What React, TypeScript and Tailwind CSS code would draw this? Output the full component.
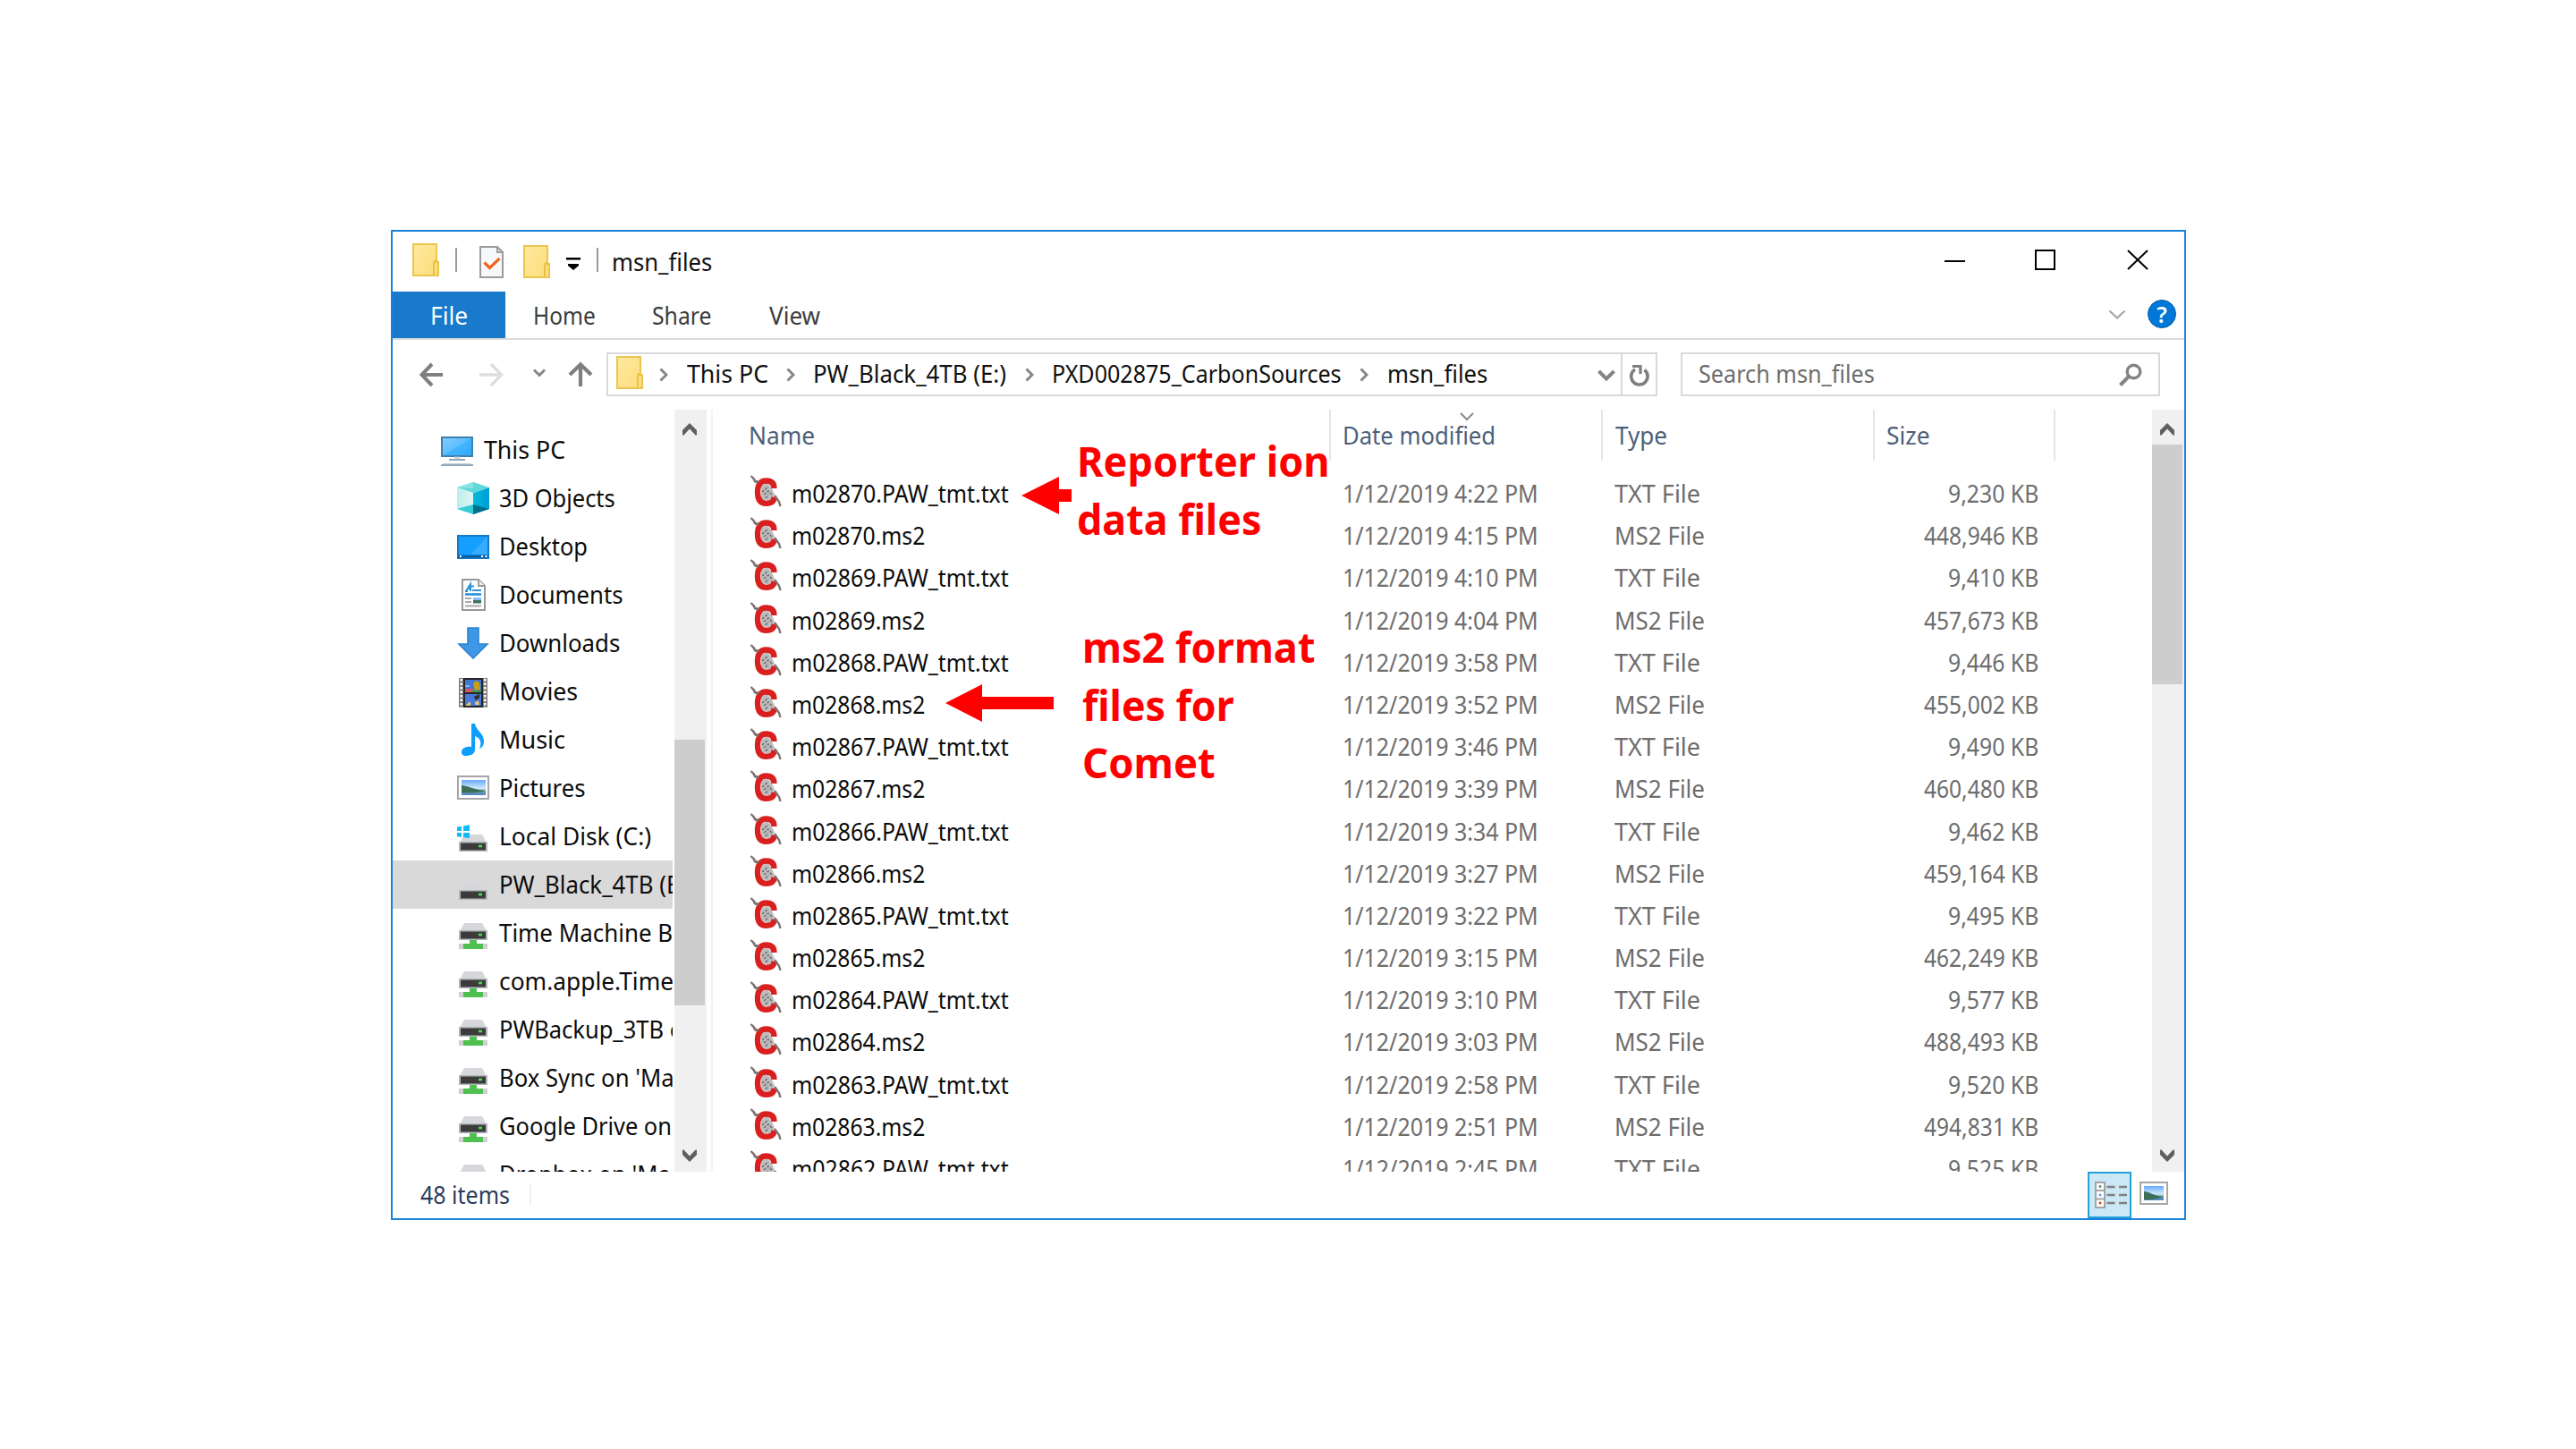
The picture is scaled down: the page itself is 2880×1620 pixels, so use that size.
import { useLayoutEffect, useRef, useState, type ReactNode } from "react";

/** Single line of text, condensed or stretched to an exact width. */
function Fit({ w, children, className = "" }: { w: number; children: string; className?: string }) {
  const ref = useRef<HTMLSpanElement>(null);
  const [scale, setScale] = useState(1);
  useLayoutEffect(() => {
    if (ref.current) setScale(w / ref.current.offsetWidth);
  }, [w, children]);
  return (
    <span className={`block shrink-0 whitespace-nowrap ${className}`} style={{ width: w }}>
      <span ref={ref} className="inline-block origin-left" style={{ transform: `scaleX(${scale})` }}>
        {children}
      </span>
    </span>
  );
}

function Icon({ children, className = "" }: { children: ReactNode; className?: string }) {
  return (
    <svg viewBox="0 0 36 36" className={`block size-9 shrink-0 ${className}`} fill="none">
      {children}
    </svg>
  );
}

function FolderIcon({ className = "" }: { className?: string }) {
  return (
    <svg viewBox="0 0 30 37" className={`block h-[37px] w-[30px] shrink-0 ${className}`} fill="none">
      <defs>
        <linearGradient id="folder" x1="0" y1="0" x2="1" y2="1">
          <stop offset="0" stopColor="#ffe9a0" />
          <stop offset="1" stopColor="#fddc7b" />
        </linearGradient>
      </defs>
      <path d="M1 1H27V21H29V36H1Z" fill="url(#folder)" stroke="#eac64f" strokeWidth="2" />
      <path d="M27 20H25L24 23V35M27 20V22" stroke="#e8c040" strokeWidth="2" />
    </svg>
  );
}

function PcIcon() {
  return (
    <Icon>
      <defs>
        <linearGradient id="screen" x1="0" y1="0" x2="1" y2="1">
          <stop offset="0" stopColor="#86cdff" />
          <stop offset=".5" stopColor="#5cbfff" />
          <stop offset=".5" stopColor="#44b5ff" />
          <stop offset="1" stopColor="#30a9fb" />
        </linearGradient>
      </defs>
      <rect x="1" y="4" width="34" height="21" fill="url(#screen)" stroke="#3d7fae" strokeWidth="2" />
      <path d="M15 26.5H21" stroke="#c5cdd6" strokeWidth="2" />
      <path d="M9 29H27" stroke="#93a5b5" strokeWidth="2" />
      <path d="M3 33H33L36 37H0Z" fill="#c3ccd5" />
      <path d="M0 35.2H36" stroke="#8fa3b6" strokeWidth="1.8" />
    </Icon>
  );
}

function CubeIcon() {
  return (
    <Icon>
      <defs>
        <linearGradient id="cubeL" x1="0" y1="0" x2="1" y2="0">
          <stop offset="0" stopColor="#bdeeed" />
          <stop offset="1" stopColor="#dff6f2" />
        </linearGradient>
        <linearGradient id="cubeR" x1="0" y1="0" x2="1" y2="0">
          <stop offset="0" stopColor="#00bcd8" />
          <stop offset="1" stopColor="#009bd9" />
        </linearGradient>
      </defs>
      <path d="M0 6L18 12V36L0 30Z" fill="url(#cubeL)" />
      <path d="M36 6L18 12V36L36 30Z" fill="url(#cubeR)" />
      <path d="M0 6L18 0L36 6L18 12Z" fill="#5fd8dc" />
      <path d="M0 6L18 0V7Z" fill="#8be4e4" />
      <path d="M0 30L18 25V36Z" fill="#33cdd8" />
      <path d="M18 25L36 30L18 36Z" fill="#006f8c" />
    </Icon>
  );
}

function DesktopIcon() {
  return (
    <Icon>
      <rect x="1" y="6" width="34" height="25" fill="#149fff" stroke="#1579c4" strokeWidth="2" />
      <path d="M34 7V27H15Z" fill="#35acff" />
      <path d="M1 29H35" stroke="#0a5ea5" strokeWidth="3" />
      <path d="M3 29H5M27 29H29M31.500 29H33.500" stroke="#fff" strokeWidth="2" />
    </Icon>
  );
}

function DocumentIcon() {
  return (
    <Icon>
      <path d="M6 1H24L31 8V35H6Z" fill="#fff" stroke="#989898" strokeWidth="2" />
      <path d="M24 1V8H31" fill="#eee" stroke="#989898" strokeWidth="1.800" />
      <path d="M9 14H12M10.500 13L15 6V14M12 11H15M16 8.500H19M17 13H27" stroke="#2b93d8" strokeWidth="2" />
      <path d="M9 17.500H27" stroke="#2491de" strokeWidth="2.600" />
      <path d="M9 22H16M9 26H16M9 30.500H27" stroke="#a9a9a9" strokeWidth="2" />
      <rect x="18" y="21" width="9" height="3.500" fill="#88bcff" />
      <rect x="18" y="24" width="9" height="3.500" fill="#3d7462" />
    </Icon>
  );
}

function DownloadIcon() {
  return (
    <Icon>
      <path d="M12 1H24V19H34L18 35L2 19H12Z" fill="#3e97e6" stroke="#2d82cf" strokeWidth="1.600" />
    </Icon>
  );
}

function MovieIcon() {
  return (
    <Icon>
      <rect x="2" y="3" width="32" height="34" fill="#7d7d7d" />
      <path d="M4.800 4V36M31.200 4V36" stroke="#fff" strokeWidth="2.600" strokeDasharray="2.600 1.900" />
      <rect x="7" y="3" width="22" height="34" fill="#262626" />
      <rect x="9" y="5" width="18" height="14" fill="#4076d4" />
      <rect x="9" y="21" width="18" height="13" fill="#4679d8" />
      <path d="M9 15H19V19H9Z" fill="#d9545d" />
      <path d="M18 9L21 6L25 8L26 16L20 17Z" fill="#c8a015" />
      <path d="M17 17H27V19H17Z" fill="#3c9b4a" />
      <path d="M9 11H14V13H9Z" fill="#8fb2ea" />
      <path d="M19 24L25 21V25L21 28Z" fill="#342b22" />
      <path d="M11 32L15 29V34H10ZM20 30L24 28L25 33H20Z" fill="#e3c567" />
    </Icon>
  );
}

function MusicIcon() {
  return (
    <Icon>
      <path d="M16 0H20C21 8 30 10 30 20C30 24 28 27 25 28C28 21 26 16 20 14V29C20 34 15 36 10 36C6 36 5 34 5 32C5 27 11 25 16 26Z" fill="#0c9ffb" />
    </Icon>
  );
}

function PictureIcon({ className = "" }: { className?: string }) {
  return (
    <Icon className={className}>
      <defs>
        <linearGradient id="sky" x1="0" y1="0" x2="0" y2="1">
          <stop offset="0" stopColor="#69a8ff" />
          <stop offset=".55" stopColor="#cfe9f8" />
          <stop offset=".75" stopColor="#6f9dab" />
          <stop offset="1" stopColor="#4b83c4" />
        </linearGradient>
      </defs>
      <rect x="1" y="5" width="34" height="25" fill="#fff" stroke="#a6a6a6" strokeWidth="2" />
      <rect x="5" y="9" width="27" height="17" fill="url(#sky)" />
      <path d="M5 15C11 15 15 19 32 21C25 23 13 24 5 23Z" fill="#3c6f55" />
    </Icon>
  );
}

function Drive({ y }: { y: number }) {
  return (
    <g transform={`translate(0 ${y})`}>
      <path d="M8 0H28L33 9H3Z" fill="#d5d7da" />
      <rect x="2" y="8" width="32" height="11" fill="#b3b7bd" />
      <rect x="4" y="9.500" width="28" height="8" fill="#3b3b3b" />
      <path d="M24 13H28" stroke="#43e04a" strokeWidth="2.600" />
    </g>
  );
}

const DiskIcon = () => (
  <Icon>
    <Drive y={16} />
  </Icon>
);

const SystemDiskIcon = () => (
  <Icon>
    <Drive y={16} />
    <path d="M0 7.500L5 6.700V12H0ZM7 6.400L14 5.300V12H7ZM0 14H5V19L0 18.200ZM7 14H14V20L7 19.200Z" fill="#0fbcf5" />
  </Icon>
);

const NetDriveIcon = () => (
  <Icon>
    <Drive y={7} />
    <rect x="2" y="30" width="32" height="6.500" fill="#cfd0d2" />
    <path d="M14 26H22V30H29V36.500H7V30H14Z" fill="#4fbf50" />
  </Icon>
);

function FileIcon() {
  return (
    <Icon className="mt-[3px]">
      <path d="M13 12L20 9L25 15L28 22L22 29L13 27Z" fill="#bdbdbf" />
      <path d="M14 19L21 13M16 22L21 18L26 23M18 26L21 22" stroke="#716d6d" strokeWidth="1.600" strokeDasharray="3 1.500" />
      <path
        d="M27.500 15C27.500 9 24 6.500 18.500 6.500C11.500 6.500 9 12 9 19C9 27 12 31.800 18.500 31.800C24 31.800 27.500 30 27.500 24.500"
        stroke="#d9201f"
        strokeWidth="6.300"
      />
      <path d="M2 1L5 5L11 7L9 10L5 8Z" fill="#7d7170" />
      <path d="M1.500 1L6 5.500M28 23L33 30L34.500 35" stroke="#7d7170" strokeWidth="2.400" />
    </Icon>
  );
}

function Chevron({ className }: { className: string }) {
  return (
    <svg viewBox="0 0 16 14" className={`block shrink-0 ${className}`} fill="none">
      <path d="M0 13.500V8L8 0L16 8V13.500H14.500L8 6.500L1.500 13.500Z" fill="#606060" />
    </svg>
  );
}

function Crumb() {
  return (
    <svg viewBox="0 0 10 16" className="block h-4 w-2.5 shrink-0" fill="none">
      <path d="M1.500 1.500L8 8L1.500 14.500" stroke="#868686" strokeWidth="3" />
    </svg>
  );
}

function ScrollBar({ thumb }: { thumb: string }) {
  return (
    <div className="flex w-9 shrink-0 flex-col bg-[#f0f0f0]">
      <div className="flex h-[38px] shrink-0 items-end justify-center pr-[2px] pb-[9px]">
        <Chevron className="h-3.5 w-4" />
      </div>
      <div className="flex-1">
        <div className={`w-[34px] bg-[#cdcdcd] ${thumb}`} />
      </div>
      <div className="flex h-[38px] shrink-0 items-start justify-center pt-[13px] pr-[2px]">
        <Chevron className="h-3.5 w-4 rotate-180" />
      </div>
    </div>
  );
}

const places = [
  { name: "3D Objects", w: 130, icon: <CubeIcon /> },
  { name: "Desktop", w: 99, icon: <DesktopIcon /> },
  { name: "Documents", w: 139, icon: <DocumentIcon /> },
  { name: "Downloads", w: 135, icon: <DownloadIcon /> },
  { name: "Movies", w: 88, icon: <MovieIcon /> },
  { name: "Music", w: 74, icon: <MusicIcon /> },
  { name: "Pictures", w: 96, icon: <PictureIcon /> },
  { name: "Local Disk (C:)", w: 170, icon: <SystemDiskIcon /> },
  { name: "PW_Black_4TB (E:)", w: 216, icon: <DiskIcon />, selected: true },
  { name: "Time Machine B", w: 194, icon: <NetDriveIcon /> },
  { name: "com.apple.Time", w: 195, icon: <NetDriveIcon /> },
  { name: "PWBackup_3TB on", w: 222, icon: <NetDriveIcon /> },
  { name: "Box Sync on 'Ma", w: 196, icon: <NetDriveIcon /> },
  { name: "Google Drive on", w: 193, icon: <NetDriveIcon /> },
  { name: "Dropbox on 'Ma", w: 192, icon: <NetDriveIcon /> },
];

const files: [string, string, string, string][] = [
  ["m02870.PAW_tmt.txt", "4:22", "TXT", "9,230"],
  ["m02870.ms2", "4:15", "MS2", "448,946"],
  ["m02869.PAW_tmt.txt", "4:10", "TXT", "9,410"],
  ["m02869.ms2", "4:04", "MS2", "457,673"],
  ["m02868.PAW_tmt.txt", "3:58", "TXT", "9,446"],
  ["m02868.ms2", "3:52", "MS2", "455,002"],
  ["m02867.PAW_tmt.txt", "3:46", "TXT", "9,490"],
  ["m02867.ms2", "3:39", "MS2", "460,480"],
  ["m02866.PAW_tmt.txt", "3:34", "TXT", "9,462"],
  ["m02866.ms2", "3:27", "MS2", "459,164"],
  ["m02865.PAW_tmt.txt", "3:22", "TXT", "9,495"],
  ["m02865.ms2", "3:15", "MS2", "462,249"],
  ["m02864.PAW_tmt.txt", "3:10", "TXT", "9,577"],
  ["m02864.ms2", "3:03", "MS2", "488,493"],
  ["m02863.PAW_tmt.txt", "2:58", "TXT", "9,520"],
  ["m02863.ms2", "2:51", "MS2", "494,831"],
  ["m02862.PAW_tmt.txt", "2:45", "TXT", "9,525"],
];

function TitleBar() {
  return (
    <div className="flex h-[67px] shrink-0 items-start pl-[22px]">
      <FolderIcon className="mt-[13px]" />
      <div className="mt-[18px] ml-[18px] h-[27px] w-[2px] bg-[#9a9a9a]" />
      <svg viewBox="0 0 27 36" className="mt-4 ml-[25px] block h-9 w-[27px]" fill="none">
        <path d="M1 1H20L26 7V35H1Z" fill="#f7f8f9" stroke="#9b9b9b" strokeWidth="2" />
        <path d="M20 1V7H26" stroke="#9b9b9b" strokeWidth="2" />
        <path d="M5.500 18.500L11.500 24.500L22.500 14" stroke="#f2651f" strokeWidth="3.200" />
      </svg>
      <FolderIcon className="mt-[15px] ml-[22px]" />
      <svg viewBox="0 0 16 14" className="mt-[29px] ml-[18px] block h-3.5 w-4">
        <path d="M0 0H16V2.500H0ZM2 7H14V9L8 14L2 9Z" fill="#000" />
      </svg>
      <div className="mt-[18px] ml-[18px] h-[27px] w-[2px] bg-[#9a9a9a]" />
      <Fit w={112} className="mt-[14px] ml-[15px] leading-10 text-[#111]">msn_files</Fit>
      <div className="flex-1" />
      <svg viewBox="0 0 228 24" className="mt-[20px] mr-[40px] block h-6 w-[228px]" fill="none" stroke="#000" strokeWidth="2">
        <path d="M0 13H23" />
        <rect x="102" y="1" width="21" height="21" />
        <path d="M205 1L227 22M227 1L205 22" />
      </svg>
    </div>
  );
}

function Ribbon() {
  return (
    <div className="flex h-[54px] shrink-0 items-stretch border-b-2 border-[#dadada] leading-[53px] text-[#3c3c3c]">
      <div className="flex w-[126px] bg-[#1979ca] pl-[42px] text-white">
        <Fit w={42}>File</Fit>
      </div>
      <Fit w={70} className="ml-[31px]">Home</Fit>
      <Fit w={67} className="ml-[63px]">Share</Fit>
      <Fit w={57} className="ml-[64px]">View</Fit>
      <div className="flex-1" />
      <svg viewBox="0 0 20 12" className="mt-5 block h-3 w-5" fill="none">
        <path d="M1.500 1.500L10 9.500L18.500 1.500" stroke="#a5a5a5" strokeWidth="2.200" />
      </svg>
      <div className="mt-[9px] mr-[9px] ml-6 flex size-8 items-center justify-center rounded-full border-[1.500px] border-[#0a5cab] bg-[#0078d7] text-[25px] leading-none font-semibold text-white">
        ?
      </div>
    </div>
  );
}

function AddressBar() {
  return (
    <div className="flex h-[78px] shrink-0 items-start pt-[14px] pl-[30px] leading-[46px]">
      <svg viewBox="0 0 196 30" className="mt-[10px] block h-[30px] w-[196px]" fill="none">
        <path d="M14 3L2.500 15L14 27M2.500 15H26" stroke="#7f7f7f" strokeWidth="4" />
        <path d="M80 3L91.500 15L80 27M67 15H91.500" stroke="#dedede" strokeWidth="3.500" />
        <path d="M128 9.500L134 15.500L140 9.500" stroke="#858585" strokeWidth="3" />
        <path d="M168 15L180 3.500L192 15M180 4V28" stroke="#7f7f7f" strokeWidth="4.200" />
      </svg>
      <div className="ml-[13px] flex h-[49px] w-[1175px] items-center border-2 border-[#d9d9d9]">
        <FolderIcon className="-mt-[5px] ml-[9px]" />
        <div className="flex flex-1 items-center pl-[18px] text-[#111]">
          <Crumb />
          <Fit w={91} className="-mt-px ml-[21px]">This PC</Fit>
          <div className="w-5" />
          <Crumb />
          <Fit w={216} className="-mt-px ml-[20px]">PW_Black_4TB (E:)</Fit>
          <div className="w-[21px]" />
          <Crumb />
          <Fit w={324} className="-mt-px ml-[20px]">PXD002875_CarbonSources</Fit>
          <div className="w-5" />
          <Crumb />
          <Fit w={112} className="-mt-px ml-[21px]">msn_files</Fit>
        </div>
        <svg viewBox="0 0 20 15" className="mr-[6px] block h-[15px] w-5" fill="none">
          <path d="M1.500 4L10 12.500L18.500 4" stroke="#858585" strokeWidth="4" />
        </svg>
        <div className="flex h-full w-[39px] items-center justify-center border-l-2 border-[#d9d9d9]">
          <svg viewBox="0 0 24 26" className="block h-[26px] w-6" fill="none">
            <path d="M17.500 7.500A9.200 9.200 0 1 1 7 7" stroke="#7f7f7f" strokeWidth="3.600" />
            <path d="M4 3.500H13V12" stroke="#7f7f7f" strokeWidth="3.200" />
          </svg>
        </div>
      </div>
      <div className="ml-[26px] flex h-[49px] w-[536px] items-center justify-between border-2 border-[#d9d9d9] pr-[18px] pl-[18px] text-[#6d6d6d]">
        <Fit w={197} className="-mt-px">Search msn_files</Fit>
        <svg viewBox="0 0 26 26" className="block size-[26px]" fill="none">
          <circle cx="16.500" cy="9.500" r="7.300" stroke="#838383" strokeWidth="3.400" />
          <path d="M11.500 14.500L1.500 24.500" stroke="#838383" strokeWidth="4" />
        </svg>
      </div>
    </div>
  );
}

function Sidebar() {
  return (
    <>
      <div className="mr-[2px] w-[313px] shrink-0 overflow-hidden pt-[18px] leading-[54px] text-[#0c0c0c]">
        <div className="flex h-[54px] items-center pl-[54px]">
          <PcIcon />
          <Fit w={91} className="ml-3 h-[54px]">This PC</Fit>
        </div>
        {places.map((p) => (
          <div key={p.name} className={`flex h-[54px] items-center pl-[72px] ${p.selected ? "bg-[#d9d9d9]" : ""}`}>
            {p.icon}
            <Fit w={p.w} className="ml-[11px] h-[54px]">{p.name}</Fit>
          </div>
        ))}
      </div>
      <ScrollBar thumb="mt-[331px] h-[297px]" />
      <div className="mr-[2px] ml-[5px] w-[2px] shrink-0 bg-[#f3f3f3]" />
    </>
  );
}

function FileList() {
  return (
    <div className="min-w-0 flex-1 overflow-hidden">
      <div className="flex h-[57px] leading-[58px] text-[#4c607a]">
        <div className="w-[689px] border-r-2 border-[#e5e5e5] pl-[38px]">
          <Fit w={74}>Name</Fit>
        </div>
        <div className="relative w-[304px] border-r-2 border-[#e5e5e5] pl-[13px]">
          <Fit w={171}>Date modified</Fit>
          <svg viewBox="0 0 16 10" className="absolute top-[3px] left-[144px] block h-2.5 w-4" fill="none">
            <path d="M1 1L8 8L15 1" stroke="#8c8c8c" strokeWidth="2" />
          </svg>
        </div>
        <div className="w-[304px] border-r-2 border-[#e5e5e5] pl-[14px]">
          <Fit w={58}>Type</Fit>
        </div>
        <div className="w-[202px] border-r-2 border-[#e5e5e5] pl-[13px]">
          <Fit w={49}>Size</Fit>
        </div>
      </div>
      <div className="pt-[13px] leading-[48px] text-[#6d6d6d]">
        {files.map(([name, time, type, size]) => (
          <div key={name} className="flex h-[47.200px]">
            <div className="flex w-[702px] pl-[39px] text-[#0c0c0c]">
              <FileIcon />
              <Fit w={name.endsWith("txt") ? 243 : 149} className="ml-[11px]">{name}</Fit>
            </div>
            <Fit w={219}>{`1/12/2019 ${time} PM`}</Fit>
            <Fit w={type === "TXT" ? 96 : 101} className="ml-[85px]">{`${type} File`}</Fit>
            <div className={type === "TXT" ? "w-[277px]" : "w-[245px]"} />
            <Fit w={size.length > 5 ? 128 : 101}>{`${size} KB`}</Fit>
          </div>
        ))}
      </div>
    </div>
  );
}

function StatusBar() {
  return (
    <div className="flex h-[52px] shrink-0 items-start leading-[52px] text-[#2b3d5c]">
      <Fit w={100} className="ml-[31px]">48 items</Fit>
      <div className="mt-[14px] ml-[22px] h-6 w-[2px] bg-[#f0f0f0]" />
      <div className="flex-1" />
      <div className="flex h-[52px] w-[49px] items-center justify-center border-2 border-[#26a0da] bg-[#cbe8f6] pl-[2px]">
        <svg viewBox="0 0 36 30" className="block h-[30px] w-9 shrink-0" fill="none">
          <path d="M1 1H11V29H1ZM1 10H11M1 19.500H11" fill="#fff" stroke="#a3a3a3" strokeWidth="2" />
          <path d="M4.700 5.500H7.300" stroke="#4f8b73" strokeWidth="2.600" />
          <path d="M4.700 15H7.300" stroke="#5c9bff" strokeWidth="2.600" />
          <path d="M4.700 24H7.300" stroke="#d83030" strokeWidth="2.600" />
          <path d="M13.500 6H22.500M27 6H36M13.500 15H22.500M27 15H36M13.500 24H22.500M27 24H36" stroke="#808080" strokeWidth="2.400" />
        </svg>
      </div>
      <svg viewBox="0 0 32 26" className="mt-[11px] mr-[18px] ml-[9px] block h-[26px] w-8" fill="none">
        <rect x="1" y="1" width="30" height="24" fill="#fff" stroke="#a6a6a6" strokeWidth="2" />
        <rect x="5" y="5" width="22" height="16" fill="url(#sky)" />
        <path d="M5 11C10 11 13 15 27 17C20 19 12 21 5 20Z" fill="#3c6f55" />
      </svg>
    </div>
  );
}

function Annotations() {
  return (
    <>
      <svg viewBox="0 0 56 42" className="absolute top-[533px] left-[1142px] h-[42px] w-14">
        <path d="M0 21L42 0V14H56V28H42V42Z" fill="#f00" />
      </svg>
      <svg viewBox="0 0 121 42" className="absolute top-[765px] left-[1057px] h-[42px] w-[121px]">
        <path d="M0 21L41 0V14H121V28H41V42Z" fill="#f00" />
      </svg>
      <div className="absolute top-[483px] left-[1204px] text-[47px] leading-[64.500px] font-bold text-[#f00]">
        <Fit w={283}>Reporter ion</Fit>
        <Fit w={206}>data files</Fit>
      </div>
      <div className="absolute top-[691px] left-[1210px] text-[47px] leading-[64.500px] font-bold text-[#f00]">
        <Fit w={260}>ms2 format</Fit>
        <Fit w={170}>files for</Fit>
        <Fit w={149}>Comet</Fit>
      </div>
    </>
  );
}

export default function App() {
  return (
    <div className="relative h-[1620px] w-[2880px] overflow-hidden bg-white pt-[257px] pl-[437px] font-['Noto_Sans',sans-serif] text-[27px]">
      <div className="flex h-[1107px] w-[2007px] flex-col border-2 border-[#1a82d9] bg-white">
        <TitleBar />
        <Ribbon />
        <AddressBar />
        <div className="flex h-[852px] shrink-0 overflow-hidden">
          <Sidebar />
          <FileList />
          <ScrollBar thumb="mt-px h-[268px]" />
        </div>
        <StatusBar />
      </div>
      <Annotations />
    </div>
  );
}
